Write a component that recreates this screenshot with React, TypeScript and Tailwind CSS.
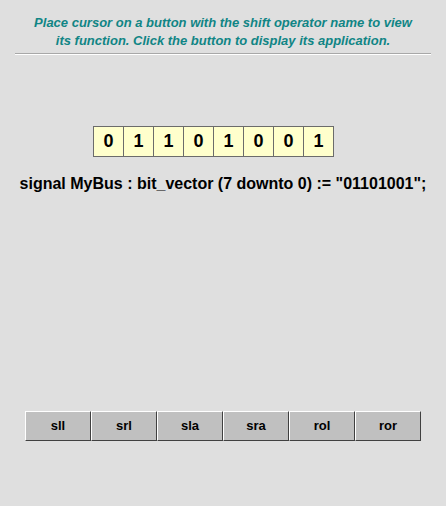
const bits = ["0", "1", "1", "0", "1", "0", "0", "1"];
const ops = ["sll", "srl", "sla", "sra", "rol", "ror"];

export default function App() {
  return (
    <div className="w-[446px] h-[506px] bg-[#dfdfdf] font-['Liberation_Sans',Arial,sans-serif] flex flex-col">
      <div className="pt-[14px] px-[15px]">
        <p className="text-center text-[13px] leading-[18px] font-bold italic text-[#108585]">
          Place cursor on a button with the shift operator name to view
          <br />
          its function. Click the button to display its application.
        </p>
        <div className="mt-[3px] h-px bg-[#a8a8a8] border-b border-white box-content" />
      </div>

      <div className="mt-[71px] pl-[93px] flex">
        <div className="flex border-l border-[#6b6b6b]">
          {bits.map((b, i) => (
            <div
              key={i}
              className="w-[30px] h-[31px] bg-[#ffffcc] border-y border-r border-[#6b6b6b] flex items-center justify-center text-[18px] font-bold text-black"
            >
              {b}
            </div>
          ))}
        </div>
      </div>

      <p className="mt-[15px] text-center text-[16px] font-bold text-black">
        signal MyBus : bit_vector (7 downto 0) := "01101001";
      </p>

      <div className="mt-[215px] flex justify-center">
        {ops.map((op) => (
          <button
            key={op}
            className="w-[66px] h-[30px] bg-[#c0c0c0] border border-t-white border-l-white border-r-[#404040] border-b-[#404040] text-[13px] font-bold text-black"
          >
            {op}
          </button>
        ))}
      </div>
    </div>
  );
}
